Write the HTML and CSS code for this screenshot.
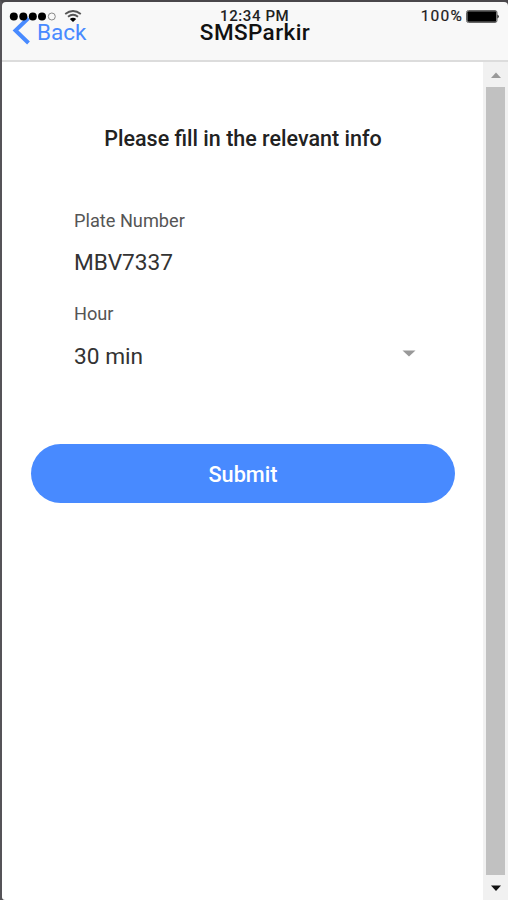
FILE: index.html
```html
<!DOCTYPE html>
<html lang="en">
<head>
<meta charset="utf-8">
<title>SMSParkir</title>
<link rel="stylesheet" href="styles.css">
</head>
<body>
<div class="phone">
  <div class="status">
    <svg class="signal" width="74" height="14" viewBox="0 0 74 14">
      <circle cx="4.800" cy="7.500" r="4"/><circle cx="14.300" cy="7.500" r="4"/><circle cx="23.800" cy="7.500" r="4"/><circle cx="33" cy="7.500" r="4"/>
      <circle cx="42.800" cy="7.500" r="3.500" fill="none" stroke="#888"/>
      <path d="M56.200 5Q64 -1 71.800 5M59 7.800Q64 3.800 69 7.800" fill="none" stroke="#555" stroke-width="1.800"/>
      <path d="M60.800 10Q64 7.400 67.200 10L64 13Z"/>
    </svg>
    <span class="clock">12:34 PM</span>
    <span class="power">100%
      <svg width="34" height="13" viewBox="0 0 34 13"><rect x=".5" y=".5" width="30.500" height="12" rx="2" fill="#fff" stroke="#666"/><rect x="1.300" y="1.300" width="29" height="10.400" rx="1"/><path d="M31.500 4.500Q34 6.500 31.500 8.500Z"/></svg>
    </span>
  </div>
  <header class="navbar">
    <a class="back"><svg width="19" height="29" viewBox="0 0 19 29"><path d="M16.500 2L3.500 14.500L16.500 27" fill="none" stroke="#488aff" stroke-width="4"/></svg><span>Back</span></a>
    <h1>SMSParkir</h1>
  </header>
  <div class="body">
    <main>
      <h2>Please fill in the relevant info</h2>
      <form class="fields">
        <label>Plate Number</label>
        <div class="value">MBV7337</div>
        <label>Hour</label>
        <div class="value select"><span>30 min</span><svg width="14" height="7" viewBox="0 0 14 7"><path d="M.5 .5H13.500L7 6.500Z" fill="#999"/></svg></div>
      </form>
      <button class="submit" type="button">Submit</button>
    </main>
    <div class="scrollbar">
      <svg width="20" height="25" viewBox="0 0 20 25"><path d="M5 16L10 10.500L15 16Z" fill="#999"/></svg>
      <div class="thumb"></div>
      <svg width="20" height="25" viewBox="0 0 20 25"><path d="M5 10.500H15L10 16Z" fill="#111"/></svg>
    </div>
  </div>
</div>
</body>
</html>
```
FILE: styles.css
```css
* { box-sizing: border-box; }
body { margin: 0; background: #49474b; font-family: Roboto, sans-serif; color: #1a1a1a; }
.phone { position: relative; display: flex; flex-direction: column; width: 508px; height: 900px; border-left: 2px solid #555358; border-top: 2px solid #49474b; background: #49474b; }
.status { position: absolute; z-index: 2; top: 7px; left: 7px; right: 8px; height: 14px; display: flex; justify-content: space-between; align-items: center; font-size: 15px; line-height: 14px; }
.signal { flex: none; }
.clock { position: absolute; left: 211px; top: 0; font-weight: 500; letter-spacing: .6px; color: #222; white-space: nowrap; }
.power { display: flex; align-items: center; gap: 3px; letter-spacing: 1.2px; font-size: 15.500px; -webkit-text-stroke: .2px #222; }
.power svg { margin-top: 1px; }
.navbar { flex: none; position: relative; display: flex; justify-content: center; height: 60px; background: #f8f8f8; border-bottom: 2px solid #dcdcdc; border-radius: 4px 4px 0 0; }
.back { position: absolute; left: 10px; top: 14px; display: flex; align-items: center; gap: 6px; height: 29px; color: #488aff; font-size: 22.500px; line-height: 29px; }
.back span { padding-top: 3px; }
h1 { margin: 15px 0 0; font-size: 22.500px; line-height: 30px; font-weight: 500; letter-spacing: .4px; color: #111; }
.body { flex: 1; display: flex; background: #fff; border-bottom-left-radius: 3px; overflow: hidden; }
main { flex: 1; padding: 62px 28px 0 29px; }
h2 { margin: 0 -5px; text-align: center; font-size: 21.500px; line-height: 30px; font-weight: 500; color: #222; }
.fields { display: block; padding: 52px 40px 0 43px; }
label { display: block; font-size: 18.200px; line-height: 30px; color: #555; }
.value { height: 30px; margin: 12px 0 21px; font-size: 22.700px; line-height: 30px; color: #333; }
.select { display: flex; justify-content: space-between; margin: 13px 0 0; }
.select svg { margin: 8px -1px 0 0; }
.submit { display: block; width: 100%; height: 59px; margin-top: 72px; padding: 0; border: 0; border-radius: 30px; background: #488aff; color: #fff; font: 500 21.700px/61px Roboto, sans-serif; }
.scrollbar { width: 25px; display: flex; flex-direction: column; align-items: center; background: #f1f1f1; }
.scrollbar svg { flex: none; }
.thumb { flex: 1; width: 19px; background: #c1c1c1; }
```
